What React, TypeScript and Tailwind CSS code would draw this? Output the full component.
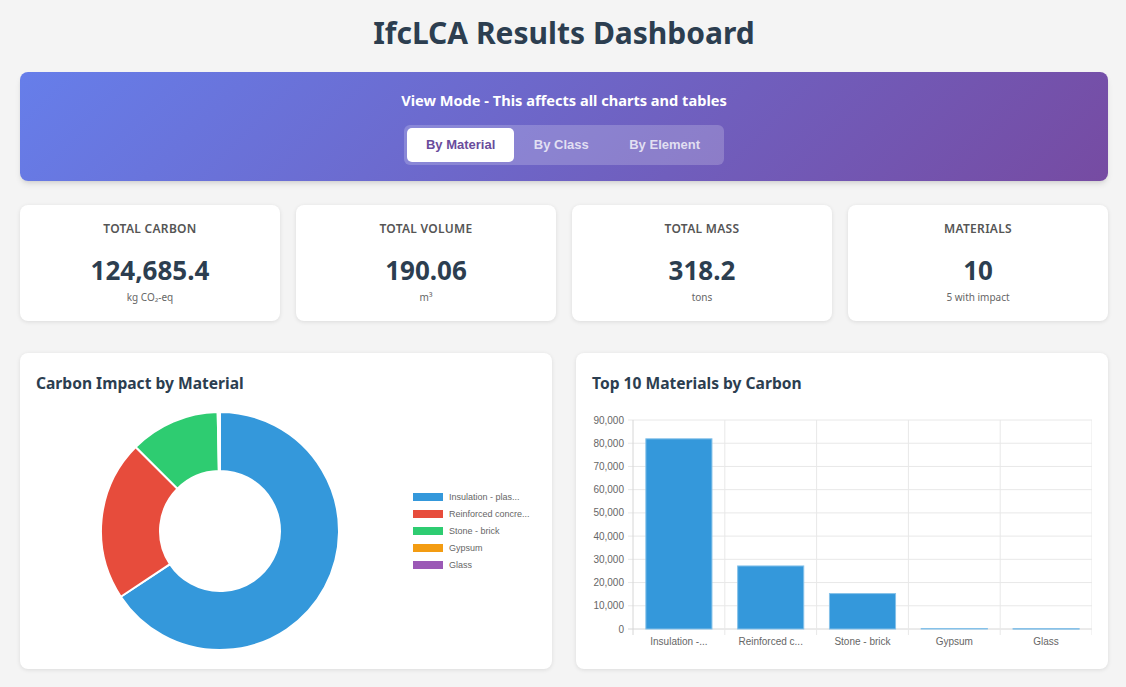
import React from "react";

const FONT = { fontFamily: '"Noto Sans", "Open Sans", sans-serif' };
const CHART_FONT = '"Liberation Sans", Arial, sans-serif';

const stats = [
  { label: "Total Carbon", value: "124,685.4", sub: "kg CO₂-eq" },
  { label: "Total Volume", value: "190.06", sub: "m³" },
  { label: "Total Mass", value: "318.2", sub: "tons" },
  { label: "Materials", value: "10", sub: "5 with impact" },
];

const materials = [
  { name: "Insulation - plas...", short: "Insulation -...", value: 81900, color: "#3498db" },
  { name: "Reinforced concre...", short: "Reinforced c...", value: 27150, color: "#e74c3c" },
  { name: "Stone - brick", short: "Stone - brick", value: 15250, color: "#2ecc71" },
  { name: "Gypsum", short: "Gypsum", value: 220, color: "#f39c12" },
  { name: "Glass", short: "Glass", value: 165, color: "#9b59b6" },
];

// angle in degrees, 0 = top, clockwise
const pt = (cx: number, cy: number, r: number, a: number) => {
  const rad = (a * Math.PI) / 180;
  return [cx + r * Math.sin(rad), cy - r * Math.cos(rad)];
};

const arcPath = (cx: number, cy: number, r0: number, r1: number, a0: number, a1: number) => {
  const large = a1 - a0 > 180 ? 1 : 0;
  const [x1, y1] = pt(cx, cy, r1, a0);
  const [x2, y2] = pt(cx, cy, r1, a1);
  const [x3, y3] = pt(cx, cy, r0, a1);
  const [x4, y4] = pt(cx, cy, r0, a0);
  return `M${x1} ${y1} A${r1} ${r1} 0 ${large} 1 ${x2} ${y2} L${x3} ${y3} A${r0} ${r0} 0 ${large} 0 ${x4} ${y4} Z`;
};

const Donut = () => {
  const total = materials.reduce((s, m) => s + m.value, 0);
  let acc = 0;
  return (
    <svg width="500" height="256" viewBox="0 0 500 256">
      {materials.map((m) => {
        const a0 = (acc / total) * 360;
        acc += m.value;
        const a1 = (acc / total) * 360;
        return (
          <path
            key={m.name}
            d={arcPath(184, 128, 60, 119, a0, a1)}
            fill={m.color}
            stroke="#fff"
            strokeWidth="2"
          />
        );
      })}
      {materials.map((m, i) => (
        <g key={m.name + "l"}>
          <rect x="377" y={90 + i * 17} width="30" height="8" fill={m.color} />
          <text x="413" y={97 + i * 17} fontSize="9" fill="#666" fontFamily={CHART_FONT}>
            {m.name}
          </text>
        </g>
      ))}
    </svg>
  );
};

const BarChart = () => {
  const x0 = 41;
  const x1 = 500;
  const yTop = 17;
  const yBot = 226;
  const step = (yBot - yTop) / 9;
  const cw = (x1 - x0) / 5;
  return (
    <svg width="500" height="256" viewBox="0 0 500 256">
      {Array.from({ length: 10 }).map((_, i) => {
        const y = yBot - i * step;
        return (
          <g key={i}>
            <line x1={x0 - 5} x2={x1} y1={y} y2={y} stroke={i === 0 ? "#d6d6d6" : "#e8e8e8"} />
            <text
              x={x0 - 9}
              y={y + 3.5}
              fontSize="10"
              fill="#666"
              textAnchor="end"
              fontFamily={CHART_FONT}
            >
              {(i * 10000).toLocaleString("en-US")}
            </text>
          </g>
        );
      })}
      {Array.from({ length: 6 }).map((_, i) => (
        <line
          key={i}
          x1={x0 + i * cw}
          x2={x0 + i * cw}
          y1={yTop}
          y2={yBot + 6}
          stroke={i === 0 ? "#d6d6d6" : "#e8e8e8"}
        />
      ))}
      {materials.map((m, i) => {
        const h = (m.value / 10000) * step;
        const bw = cw * 0.72;
        const bx = x0 + i * cw + (cw - bw) / 2;
        return (
          <g key={m.name}>
            <rect
              x={bx}
              y={yBot - h}
              width={bw}
              height={Math.max(h, 0.5)}
              fill="#3498db"
              stroke="#85c1e9"
              strokeWidth="1"
            />
            <text
              x={x0 + i * cw + cw / 2}
              y={yBot + 16}
              fontSize="10"
              fill="#666"
              textAnchor="middle"
              fontFamily={CHART_FONT}
            >
              {m.short}
            </text>
          </g>
        );
      })}
    </svg>
  );
};

export default function App() {
  return (
    <div className="min-h-[687px] bg-[#f4f4f4] pl-5 pr-[18px] pt-[14px] pb-5 text-[#2c3e50]" style={FONT}>
      <h1 className="text-center text-[30px] leading-[38px] font-bold mb-5">IfcLCA Results Dashboard</h1>

      <div className="rounded-lg bg-[linear-gradient(135deg,#667eea_0%,#764ba2_100%)] pt-[18px] pb-4 shadow-md flex flex-col items-center">
        <div className="text-white text-[14.6px] leading-5 font-bold mb-[15px]">
          View Mode - This affects all charts and tables
        </div>
        <div className="flex rounded-md bg-white/20 p-[3px]" style={{ fontFamily: CHART_FONT }}>
          <button className="rounded-[5px] bg-white px-[18.5px] h-[34px] text-[13px] font-bold text-[#6a4c9c]">
            By Material
          </button>
          <button className="px-5 h-[34px] text-[13px] font-bold text-white/75">By Class</button>
          <button className="px-[20.5px] h-[34px] text-[13px] font-bold text-white/75">By Element</button>
        </div>
      </div>

      <div className="grid grid-cols-4 gap-4 mt-6">
        {stats.map((s) => (
          <div key={s.label} className="rounded-lg bg-white shadow-[0_1px_4px_rgba(0,0,0,0.1)] pt-4 pb-[17px] text-center">
            <div className="uppercase text-[12px] leading-4 font-semibold text-[#555] tracking-[0.3px]">{s.label}</div>
            <div className="text-[26px] leading-8 font-bold mt-[17px]">{s.value}</div>
            <div className="text-[10px] leading-[14px] text-[#666] mt-1">{s.sub}</div>
          </div>
        ))}
      </div>

      <div className="grid grid-cols-2 gap-6 mt-8">
        <div className="rounded-lg bg-white shadow-[0_1px_4px_rgba(0,0,0,0.1)] px-4 pt-5 pb-[10px]">
          <h2 className="text-[15.6px] leading-5 font-bold mb-[10px]">Carbon Impact by Material</h2>
          <Donut />
        </div>
        <div className="rounded-lg bg-white shadow-[0_1px_4px_rgba(0,0,0,0.1)] px-4 pt-5 pb-[10px]">
          <h2 className="text-[15.6px] leading-5 font-bold mb-[10px]">Top 10 Materials by Carbon</h2>
          <BarChart />
        </div>
      </div>
    </div>
  );
}
